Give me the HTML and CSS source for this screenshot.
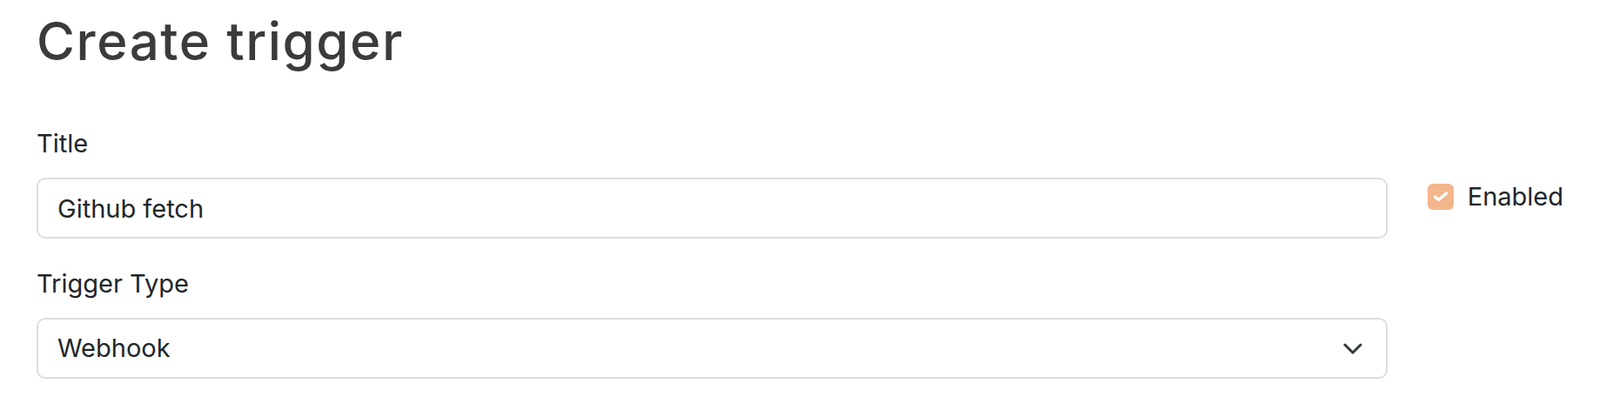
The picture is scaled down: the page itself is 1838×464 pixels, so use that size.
FILE: index.html
```html
<!DOCTYPE html>
<html lang="en">
<head>
  <meta charset="UTF-8" />
  <meta name="viewport" content="width=device-width, initial-scale=1.0"/>
  <title>Create trigger</title>
  <link rel="stylesheet" href="styles.css">
</head>
<body>

  <h1>Create trigger</h1>

  <div class="form-layout">
    <div class="form-main">
      <div class="form-group">
        <label for="titleInput">Title</label>
        <input type="text" id="titleInput" class="form-control" value="Github fetch" />
      </div>

      <div class="form-group">
        <label>Trigger Type</label>
        <div class="form-select">
          <span>Webhook</span>
          <svg width="22" height="13" viewBox="0 0 22 13">
            <path d="M2 2 L11 11 L20 2" fill="none" stroke="#343a40" stroke-width="3" stroke-linecap="round" stroke-linejoin="round"/>
          </svg>
        </div>
      </div>
    </div>

    <div class="form-side">
      <label class="check">
        <span class="check-box">
          <svg width="30" height="30" viewBox="0 0 30 30">
            <path d="M8.5 15 L12.5 18.5 L21.5 11" fill="none" stroke="#fff" stroke-width="3.5" stroke-linecap="round" stroke-linejoin="round"/>
          </svg>
        </span>
        Enabled
      </label>
    </div>
  </div>

</body>
</html>
```

FILE: styles.css
```css
body {
  font-family: Inter, "Noto Sans", sans-serif;
  color: #212529;
  background: #fff;
  margin: 0;
  padding: 11px 42px 0;
}

h1 {
  font-size: 60px;
  font-weight: 500;
  line-height: 1.2;
  color: #3b3b3b;
  letter-spacing: 1.6px;
  margin: 0 0 64px;
}

.form-layout {
  display: grid;
  grid-template-columns: 1fr auto;
  column-gap: 46px;
}

.form-group {
  margin-bottom: 34px;
}

.form-group label {
  display: block;
  font-size: 29px;
  line-height: 36px;
  margin-bottom: 21px;
}

.form-control,
.form-select {
  box-sizing: border-box;
  width: 100%;
  height: 70px;
  padding: 15px 22px;
  font: inherit;
  font-size: 29px;
  line-height: 36px;
  color: #212529;
  background: #fff;
  border: 2px solid #dedede;
  border-radius: 10px;
  outline: none;
}

.form-select {
  display: flex;
  align-items: center;
  justify-content: space-between;
  padding-right: 27px;
}

.form-side {
  padding-top: 61px;
}

.check {
  display: flex;
  align-items: center;
  gap: 16px;
  font-size: 29px;
  line-height: 36px;
}

.check-box {
  display: flex;
  align-items: center;
  justify-content: center;
  width: 30px;
  height: 30px;
  border-radius: 6px;
  background: #f3b58c;
}
```
